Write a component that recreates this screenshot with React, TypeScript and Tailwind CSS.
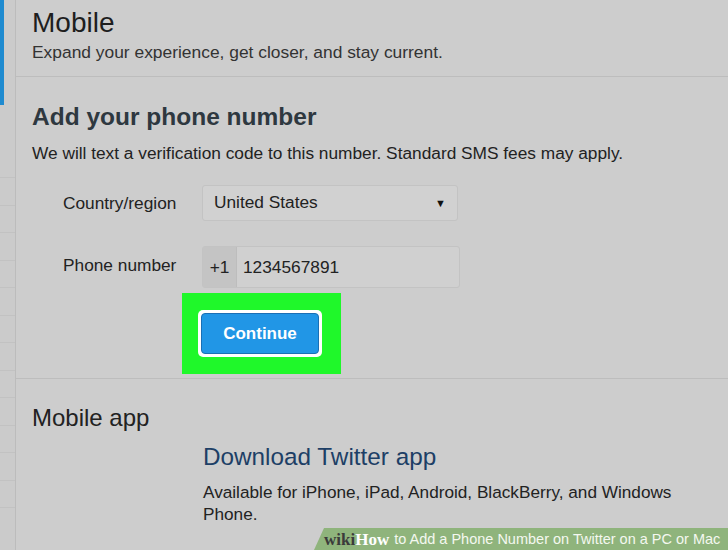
import React from "react";

const sideLines = [177, 204, 232, 260, 287, 315, 342, 370, 397, 425, 452, 480, 508];

export default function App() {
  return (
    <div
      className="relative flex h-[550px] w-[728px] overflow-hidden bg-[#cdcdcd] text-[#222]"
      style={{ fontFamily: '"Liberation Sans", Arial, sans-serif' }}
    >
      {/* sidebar */}
      <div className="relative flex w-[16px] shrink-0 flex-col border-r border-[#bcbcbc] bg-[#cbcbcb]">
        <div className="h-[105px] w-[4px] bg-[#1f8bd0]" />
        <div className="mt-[72px] flex flex-col">
          {sideLines.map((y) => (
            <div key={y} className="h-[27.5px] border-t border-[#c2c2c2]" />
          ))}
        </div>
      </div>

      {/* main */}
      <div className="flex flex-1 flex-col">
        <div className="h-[77px] border-b border-[#bdbdbd] pl-[16px] pt-[7px]">
          <div className="text-[28px] leading-[32px] text-[#1e1e1e]">Mobile</div>
          <div className="mt-[2px] text-[17.4px] leading-[22px] text-[#333]">
            Expand your experience, get closer, and stay current.
          </div>
        </div>

        <div className="h-[302px] border-b border-[#bdbdbd] pl-[16px] pt-[25px]">
          <div className="text-[24.5px] font-bold leading-[30px] text-[#2e3840]">
            Add your phone number
          </div>
          <div className="mt-[10px] text-[17.3px] leading-[22px] text-[#222]">
            We will text a verification code to this number. Standard SMS fees may apply.
          </div>

          <div className="mt-[21px] flex items-center">
            <div className="w-[170px] pl-[31px] text-[17.3px] leading-[22px]">Country/region</div>
            <div className="flex h-[36px] w-[256px] items-center justify-between rounded-[3px] border border-[#c3c3c3] bg-[#d1d1d1] pl-[11px] pr-[9px] text-[17.3px]">
              <span>United States</span>
              <span className="mr-[2px] text-[11px] text-[#111]">▼</span>
            </div>
          </div>

          <div className="mt-[25px] flex items-start">
            <div className="w-[170px] pl-[31px] pt-[8px] text-[17.3px] leading-[22px]">Phone number</div>
            <div className="flex h-[42px] w-[258px] rounded-[3px] border border-[#c3c3c3] bg-[#d0d0d0]">
              <div className="flex w-[34px] items-center justify-center border-r border-[#bdbdbd] bg-[#c4c4c4] pt-[2px] text-[17.3px]">
                +1
              </div>
              <div className="flex items-center pl-[6px] pt-[2px] text-[17.3px]">1234567891</div>
            </div>
          </div>

          <div className="ml-[150px] mt-[5px] flex h-[81px] w-[159px] items-start bg-[#1ff82a] pl-[16px] pt-[17px]">
            <div className="rounded-[5px] bg-white p-[3px]">
              <div className="flex h-[41px] w-[118px] items-center justify-center rounded-[4px] border border-[#1a6fb5] bg-[#2196e6] text-[17px] font-bold text-white">
                Continue
              </div>
            </div>
          </div>
        </div>

        <div className="pl-[16px] pt-[25px]">
          <div className="text-[24px] leading-[28px] text-[#222]">Mobile app</div>
          <div className="ml-[171px] mt-[10px] text-[24.3px] leading-[30px] text-[#1d3f66]">
            Download Twitter app
          </div>
          <div className="ml-[171px] mt-[9px] w-[510px] text-[17.2px] leading-[22px] text-[#222]">
            Available for iPhone, iPad, Android, BlackBerry, and Windows Phone.
          </div>
        </div>
      </div>

      {/* wikiHow banner */}
      <div className="absolute bottom-0 right-0 flex h-[22px] w-[414px] items-center">
        <svg className="h-[22px] w-[10px] shrink-0" viewBox="0 0 10 22" preserveAspectRatio="none">
          <polygon points="10,0 10,22 0,22" fill="#8fb47c" />
        </svg>
        <div className="flex h-full flex-1 items-center whitespace-nowrap bg-[#8fb47c] text-[14.5px] leading-none text-white">
          <span
            className="text-[17px] font-bold text-[#3b3b3b]"
            style={{ fontFamily: '"Liberation Serif", "DejaVu Serif", serif' }}
          >
            wiki
          </span>
          <span
            className="text-[17px] font-bold text-white"
            style={{ fontFamily: '"Liberation Serif", "DejaVu Serif", serif' }}
          >
            How
          </span>
          <span className="ml-[5px] text-[#f4f8f0]">
            to Add a Phone Number on Twitter on a PC or Mac
          </span>
        </div>
      </div>
    </div>
  );
}
